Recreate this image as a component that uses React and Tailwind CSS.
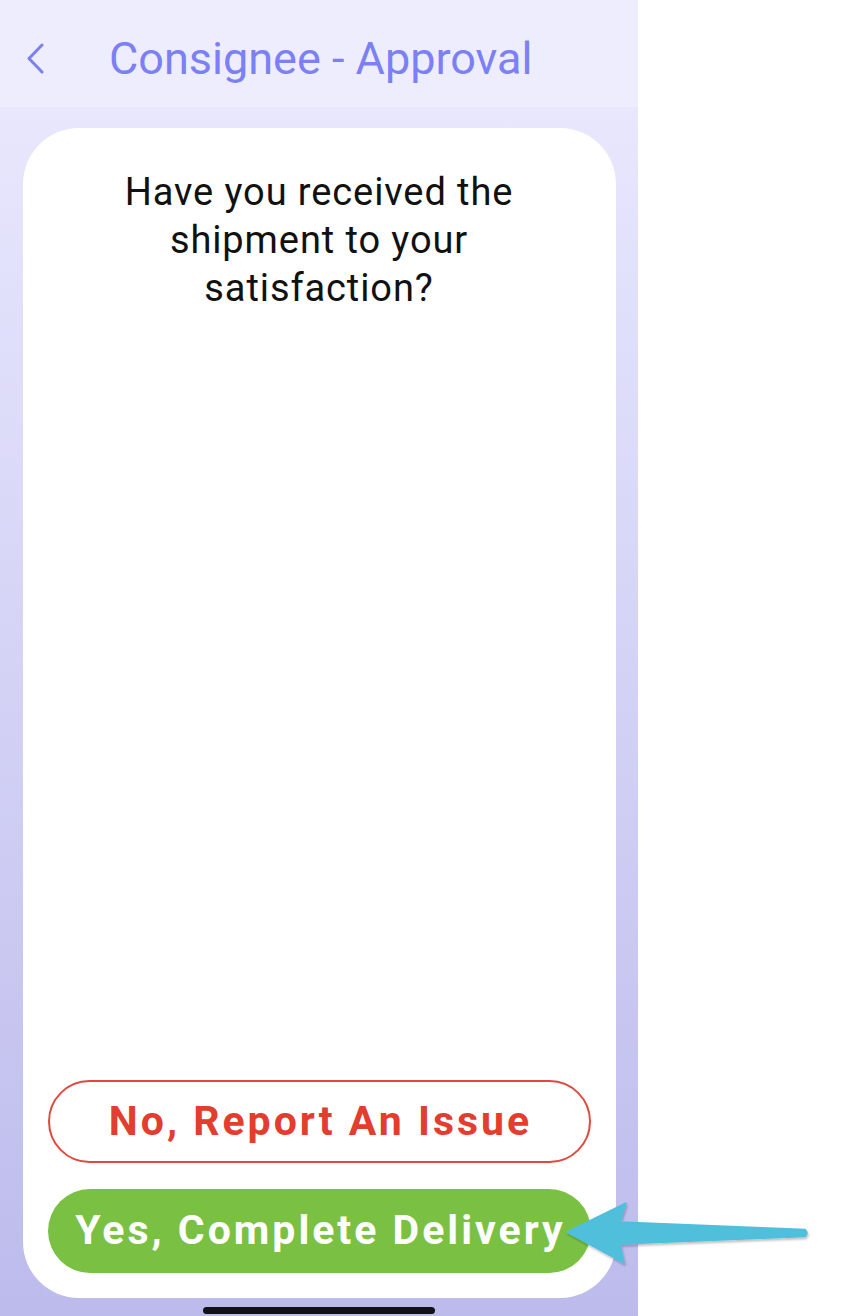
import React from 'react';

function Arrow() {
  return (
    <svg className="absolute left-[555px] top-[1195px]" width="265" height="80" viewBox="555 1195 265 80">
      <defs>
        <filter id="sh" x="-10%" y="-20%" width="120%" height="140%">
          <feDropShadow dx="1" dy="2" stdDeviation="1.2" floodColor="#000" floodOpacity="0.25" />
        </filter>
      </defs>
      <path
        d="M567 1232 L626 1203 L620 1222 L805 1229.5 Q809 1233 805 1236.5 L620 1244 L624 1263 Z"
        fill="#4fbfdc"
        stroke="#4fbfdc"
        strokeWidth="1.5"
        strokeLinejoin="round"
        filter="url(#sh)"
      />
    </svg>
  );
}

export default function App() {
  return (
    <div className="relative w-[850px] h-[1316px] bg-white flex" style={{ fontFamily: 'Roboto, "Liberation Sans", sans-serif' }}>
      <div className="w-[638px] h-full flex flex-col">
        {/* header */}
        <div className="h-[107px] bg-[#eeedfe] flex items-center">
          <svg className="ml-[26px] mt-[10px]" width="19" height="31" viewBox="0 0 19 31">
            <path d="M16 2 L3 15.5 L16 29" fill="none" stroke="#7b7ff1" strokeWidth="3" strokeLinecap="round" strokeLinejoin="round" />
          </svg>
          <h1 className="ml-[64px] mt-[10px] text-[45px] leading-none text-[#7b80f5]">Consignee - Approval</h1>
        </div>

        {/* body */}
        <div className="flex-1 flex flex-col items-center bg-gradient-to-b from-[#e8e7fd] to-[#bdbbec] pt-[21px]">
          <div className="w-[593px] h-[1170px] bg-white rounded-[56px] flex flex-col px-[25px] pb-[25px]">
            <p className="pt-[40px] text-center text-[38px] leading-[48px] tracking-[0.9px] text-[#111]">
              Have you received the
              <br />
              shipment to your
              <br />
              satisfaction?
            </p>
            <div className="flex-1" />
            <button className="h-[83px] rounded-full border-2 border-[#dd4a3e] bg-white pl-[3px] text-[41px] font-bold tracking-[3px] text-[#e23d2f]">
              No, Report An Issue
            </button>
            <button className="mt-[26px] h-[84px] rounded-full bg-[#7ac143] pl-[3px] text-[41px] font-bold tracking-[3px] text-white">
              Yes, Complete Delivery
            </button>
          </div>
          <div className="mt-[9px] w-[232px] h-[7px] rounded-full bg-[#111118]" />
        </div>
      </div>
      <Arrow />
    </div>
  );
}
